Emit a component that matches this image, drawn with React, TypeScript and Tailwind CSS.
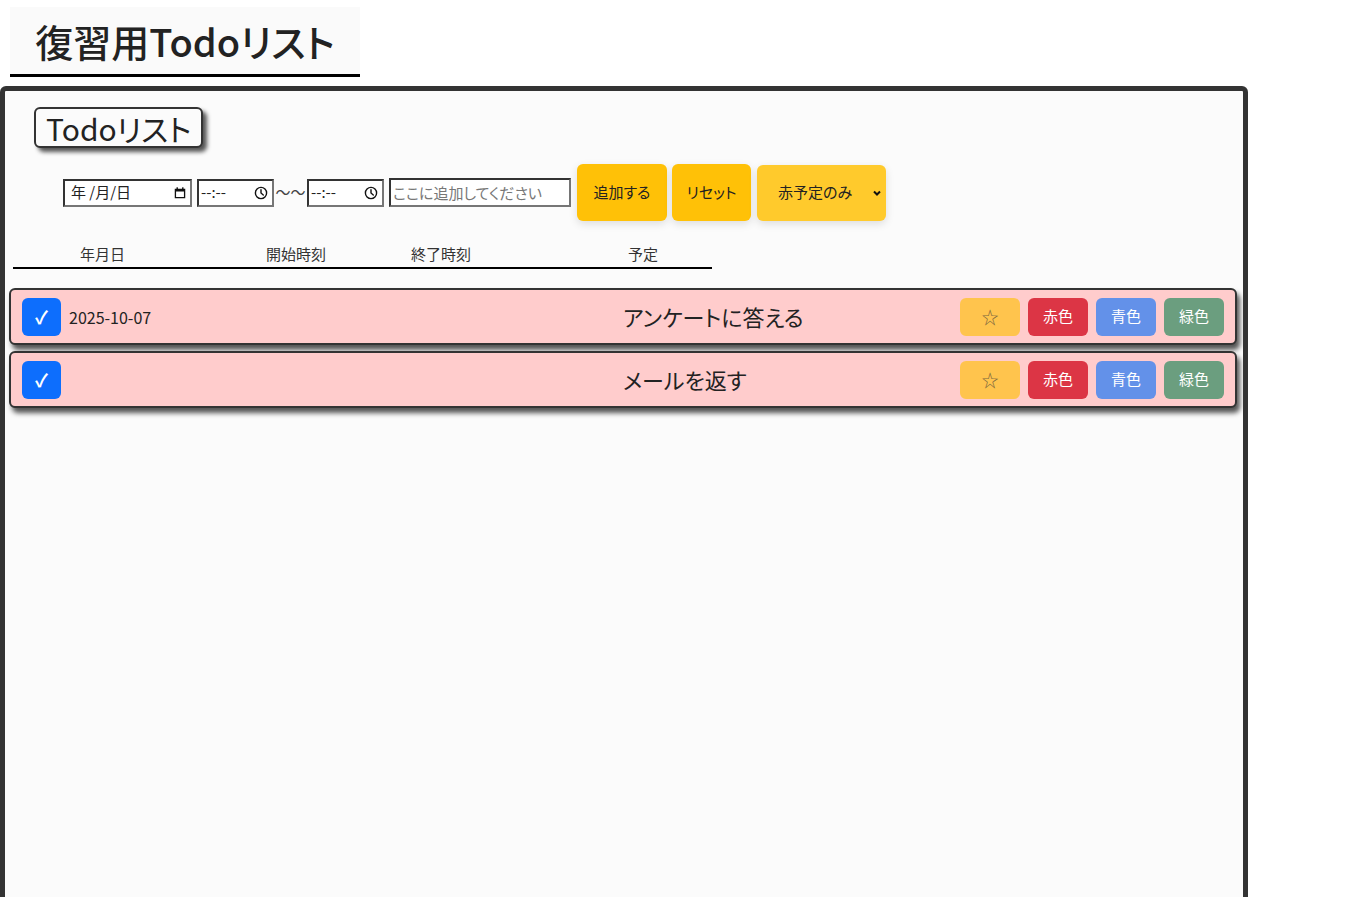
import { useState } from "react";

type Todo = {
  id: number;
  date: string;
  text: string;
};

const initialTodos: Todo[] = [
  { id: 1, date: "2025-10-07", text: "アンケートに答える" },
  { id: 2, date: "", text: "メールを返す" },
];

function ClockIcon() {
  return (
    <svg width="14" height="14" viewBox="0 0 16 16" fill="none" stroke="#111" strokeWidth="1.6">
      <circle cx="8" cy="8" r="6.4" />
      <path d="M8 4.3V8l2.6 2.2" strokeLinecap="round" />
    </svg>
  );
}

function CalendarIcon() {
  return (
    <svg width="14" height="14" viewBox="0 0 16 16" fill="#111">
      <path d="M2 3h12v11H2z M3.5 6.2v6.3h9V6.2z" fillRule="evenodd" />
      <rect x="4" y="1.5" width="1.6" height="2.5" />
      <rect x="10.4" y="1.5" width="1.6" height="2.5" />
    </svg>
  );
}

function TodoRow({ todo }: { todo: Todo }) {
  return (
    <div className="ml-[4px] mr-[6px] flex h-[57px] items-center rounded-md border-2 border-[#333] bg-[#ffcccc] pl-[11px] pr-[11px] shadow-[3px_5px_5px_#555]">
      <button className="flex h-[38px] w-[39px] items-center justify-center rounded-md bg-[#0d6efd] text-[18px] font-bold text-white">
        ✓
      </button>
      <span className="ml-[8px] w-[554px] text-[16px] text-[#222]">{todo.date}</span>
      <span className="flex-1 text-[22px] text-[#222]">{todo.text}</span>
      <div className="flex gap-[8px]">
        <button className="h-[38px] w-[60px] rounded-md bg-[#ffc44d] text-[17px] text-[#7a6640]">☆</button>
        <button className="h-[38px] w-[60px] rounded-md bg-[#dc3545] text-[15px] text-white">赤色</button>
        <button className="h-[38px] w-[60px] rounded-md bg-[#6391e9] text-[15px] text-white">青色</button>
        <button className="h-[38px] w-[60px] rounded-md bg-[#6b9e7f] text-[15px] text-white">緑色</button>
      </div>
    </div>
  );
}

export default function App() {
  const [todos] = useState<Todo[]>(initialTodos);
  const [text, setText] = useState("");

  return (
    <div className="min-h-screen bg-white font-['Noto_Sans_CJK_JP','Noto_Sans',sans-serif] text-[#222] [font-feature-settings:'palt']">
      <header className="ml-[10px] mt-[7px] flex h-[70px] w-[350px] items-center justify-center border-b-[3px] border-black bg-[#fafafa]">
        <h1 className="text-[38px] font-medium leading-none text-[#222]">復習用Todoリスト</h1>
      </header>

      <main className="mt-[9px] h-[830px] w-[1248px] rounded-md border-[5px] border-[#333] bg-[#fbfbfb]">
        <div className="ml-[29px] mt-[16px] inline-flex h-[41px] items-center rounded-md border-2 border-[#333] bg-[#fbfbfb] px-[10px] text-[30px] leading-none shadow-[4px_4px_4px_#555]">
          Todoリスト
        </div>

        <div className="ml-[58px] mt-[16px] flex items-center">
          <div className="flex h-[28px] w-[129px] items-center justify-between border-2 border-[#333] border-b-[#767676] border-r-[#767676] bg-white pl-[6px] pr-[3px] text-[15px]">
            <span>年 /月/日</span>
            <CalendarIcon />
          </div>
          <div className="ml-[5px] flex h-[28px] w-[77px] items-center justify-between border-2 border-[#333] border-b-[#767676] border-r-[#767676] bg-white pl-[2px] pr-[4px] text-[15px]">
            <span>--:--</span>
            <ClockIcon />
          </div>
          <span className="w-[33px] text-center text-[15px] text-[#444]">〜〜</span>
          <div className="flex h-[28px] w-[77px] items-center justify-between border-2 border-[#333] border-b-[#767676] border-r-[#767676] bg-white pl-[2px] pr-[4px] text-[15px]">
            <span>--:--</span>
            <ClockIcon />
          </div>
          <input
            value={text}
            onChange={(e) => setText(e.target.value)}
            placeholder="ここに追加してください"
            className="ml-[5px] h-[29px] w-[182px] border-2 border-[#333] border-b-[#767676] border-r-[#767676] bg-white px-[2px] text-[15px] outline-none placeholder:text-[#777]"
          />
          <button className="ml-[6px] h-[57px] w-[90px] rounded-md bg-[#ffc107] text-[15px] text-[#222] shadow-[0_3px_8px_rgba(0,0,0,0.12)]">
            追加する
          </button>
          <button className="ml-[5px] h-[57px] w-[79px] rounded-md bg-[#ffc107] text-[15px] text-[#222] shadow-[0_3px_8px_rgba(0,0,0,0.12)]">
            リセット
          </button>
          <div className="ml-[6px] flex h-[56px] w-[129px] items-center justify-between rounded-md bg-[#ffca2c] pl-[21px] pr-[4px] text-[15px] text-[#222] shadow-[0_3px_8px_rgba(0,0,0,0.12)]">
            <span>赤予定のみ</span>
            <svg width="10" height="10" viewBox="0 0 10 10" fill="none" stroke="#111" strokeWidth="2">
              <path d="M2 3.5l3 3 3-3" />
            </svg>
          </div>
        </div>

        <div className="ml-[8px] mt-[23px] flex w-[699px] border-b-2 border-black pb-[3px] text-[15px] leading-[20px] text-[#333]">
          <span className="w-[253px] pl-[67px]">年月日</span>
          <span className="w-[145px]">開始時刻</span>
          <span className="w-[217px]">終了時刻</span>
          <span>予定</span>
        </div>

        <div className="mt-[19px] flex flex-col gap-[6px]">
          {todos.map((todo) => (
            <TodoRow key={todo.id} todo={todo} />
          ))}
        </div>
      </main>
    </div>
  );
}
